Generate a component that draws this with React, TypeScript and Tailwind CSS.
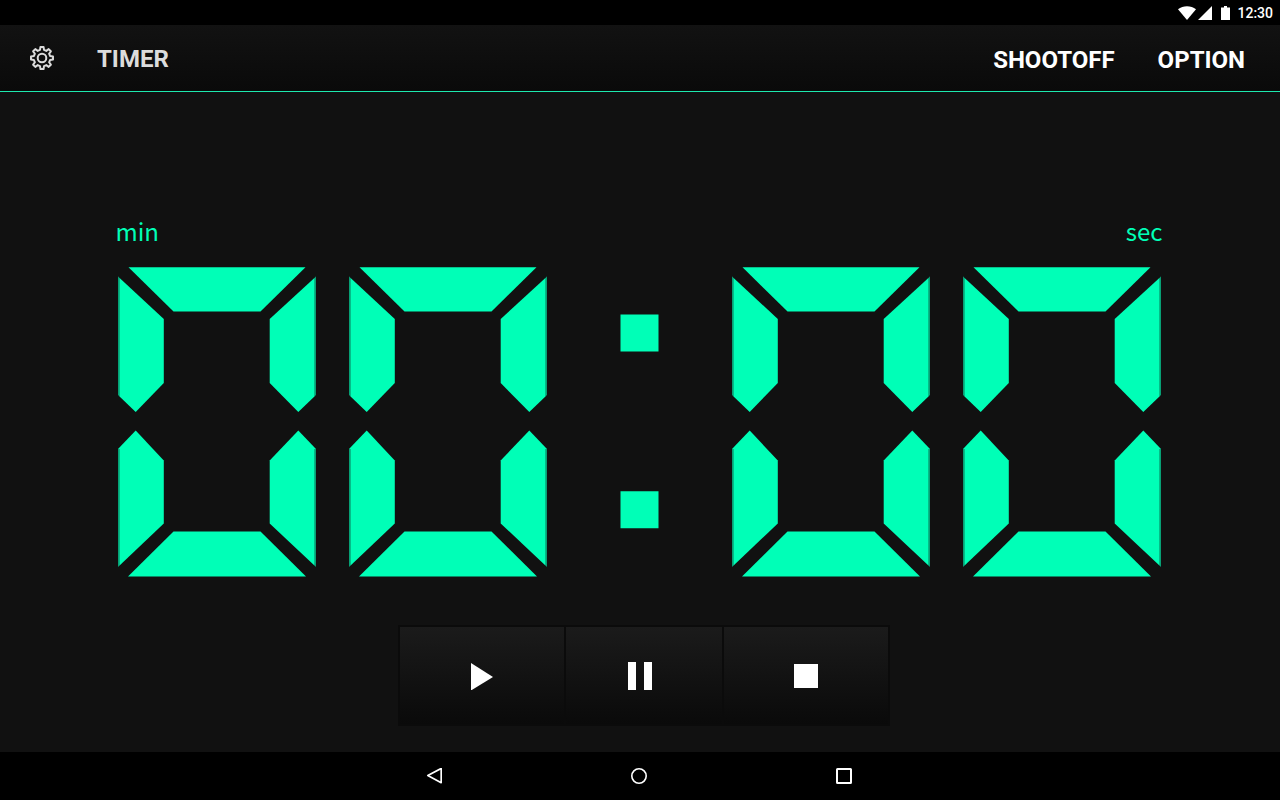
import type { ReactNode } from "react";

const teeth = 8;

function gearPath() {
  const points: string[] = [];
  for (let i = 0; i < teeth; i++) {
    const mid = (i * 360) / teeth - 90;
    const corners = [
      [8.3, -14],
      [11.1, -8],
      [11.1, 8],
      [8.3, 14],
    ];
    for (const [radius, offset] of corners) {
      const a = ((mid + offset) * Math.PI) / 180;
      points.push(`${(12 + radius * Math.cos(a)).toFixed(2)} ${(12 + radius * Math.sin(a)).toFixed(2)}`);
    }
  }
  return `M${points.join("L")}Z`;
}

function GearIcon() {
  return (
    <svg className="size-6" viewBox="0 0 24 24" fill="none" stroke="currentColor" strokeWidth="2" strokeLinejoin="round" aria-hidden="true">
      <path d={gearPath()} />
      <circle cx="12" cy="12" r="4.3" />
    </svg>
  );
}

function StatusBar() {
  return (
    <div className="flex h-[25px] items-center justify-end bg-black pr-[7px] text-white">
      <svg className="h-[14px] w-[54px]" viewBox="0 0 54 14" fill="currentColor" aria-hidden="true">
        <path d="M0 3.2C5-.9 13-.9 18 3.2L9 14Z" />
        <path d="M34 0V14H20Z" />
        <path d="M43 1.5H46V0H49V1.5H52V14H43Z" />
      </svg>
      <span className="ml-[5px] text-sm font-medium">12:30</span>
    </div>
  );
}

function Digit() {
  return (
    <svg className="h-[310px] w-[198px] shrink-0" viewBox="0 0 198 310" aria-label="0" role="img">
      <g fill="#00ffb7">
        <path d="M10.5 0.3H187.5L142.5 44.5H55.5Z" />
        <path d="M0 9.5L45.8 52V116L17.7 145L0 128Z" />
        <path d="M198 9.5L151.7 52V116L180.3 145L198 128Z" />
        <path d="M17.7 163.5L45.8 193.5V256.5L0 300V182Z" />
        <path d="M180.3 163.5L151.7 193.5V256.5L198 300V182Z" />
        <path d="M55.5 264.5H142.5L188 309.4H10Z" />
      </g>
      <path d="M.5 10V129M.5 182V300M197.5 10V129M197.5 182V300" stroke="#111" strokeOpacity=".4" strokeWidth="2.4" />
    </svg>
  );
}

function Colon() {
  return (
    <svg className="h-[310px] w-[39px] shrink-0" viewBox="0 0 39 310" fill="#00ffb7" aria-label=":" role="img">
      <path d="M.5 47.5H38V84.5H.5ZM.5 224.3H38V261.3H.5Z" />
      <path d="M38 47.5H39V84.5H38ZM38 224.3H39V261.3H38Z" opacity=".5" />
    </svg>
  );
}

function ControlButton({ label, className, children }: { label: string; className: string; children: ReactNode }) {
  return (
    <button
      type="button"
      aria-label={label}
      className={`flex h-[101px] items-center justify-center border-y-2 border-l-2 border-[#0b0b0b] bg-linear-to-b from-[#1b1b1b] to-[#0a0a0a] ${className}`}
    >
      <svg className="size-7" viewBox="0 0 28 28" fill="white" aria-hidden="true">
        {children}
      </svg>
    </button>
  );
}

export default function App() {
  return (
    <div className="flex min-h-screen flex-col bg-[#111] font-['Roboto',sans-serif] text-white">
      <StatusBar />
      <header className="flex h-[67px] items-center border-b border-[#1de9ae] bg-linear-to-b from-[#121212] to-[#0a0a0a] pr-[35px] pl-[30px] text-2xl font-bold">
        <button type="button" aria-label="Settings" className="text-[#dcdcdc]">
          <GearIcon />
        </button>
        <h1 className="ml-[43px] pt-0.5 text-[#dcdcdc]">TIMER</h1>
        <nav className="ml-auto flex gap-[43px] pt-[3px]">
          <button type="button">SHOOTOFF</button>
          <button type="button">OPTION</button>
        </nav>
      </header>

      <main className="flex grow flex-col items-center justify-end pr-0.5 pb-[26px]">
        <section aria-label="Time">
          <div className="-mx-0.5 flex justify-between pb-[18px] font-['Noto_Sans_CJK_JP',sans-serif] text-2xl leading-9 text-[#00ffb7]">
            <span>min</span>
            <span>sec</span>
          </div>
          <div className="flex">
            <div className="flex gap-[33px]">
              <Digit />
              <Digit />
            </div>
            <div className="px-[73px]">
              <Colon />
            </div>
            <div className="flex gap-[33px]">
              <Digit />
              <Digit />
            </div>
          </div>
        </section>
        <div className="mt-12 flex pl-2.5">
          <ControlButton label="Start" className="w-[166px]">
            <path d="M3 1L25 15L3 28.5Z" />
          </ControlButton>
          <ControlButton label="Pause" className="w-[158px] pr-2">
            <path d="M2 0H10V28H2ZM18 0H26V28H18Z" />
          </ControlButton>
          <ControlButton label="Stop" className="w-[168px] border-r-2">
            <path d="M2 2H26V26H2Z" />
          </ControlButton>
        </div>
      </main>

      <footer className="flex h-12 items-center justify-center gap-[189px] bg-black pr-0.5">
        <button type="button" aria-label="Back">
          <svg className="size-4" viewBox="0 0 16 16" fill="none" stroke="white" strokeWidth="1.7" strokeLinejoin="round" aria-hidden="true">
            <path d="M15.2 .4V14.7L1.8 7.5Z" />
          </svg>
        </button>
        <button type="button" aria-label="Home">
          <svg className="size-4" viewBox="0 0 16 16" fill="none" stroke="white" strokeWidth="1.6" aria-hidden="true">
            <circle cx="8" cy="8" r="7.2" />
          </svg>
        </button>
        <button type="button" aria-label="Recent apps">
          <svg className="size-4" viewBox="0 0 16 16" fill="none" stroke="white" strokeWidth="2" aria-hidden="true">
            <rect x="1" y="1" width="14" height="14" rx=".5" />
          </svg>
        </button>
      </footer>
    </div>
  );
}
